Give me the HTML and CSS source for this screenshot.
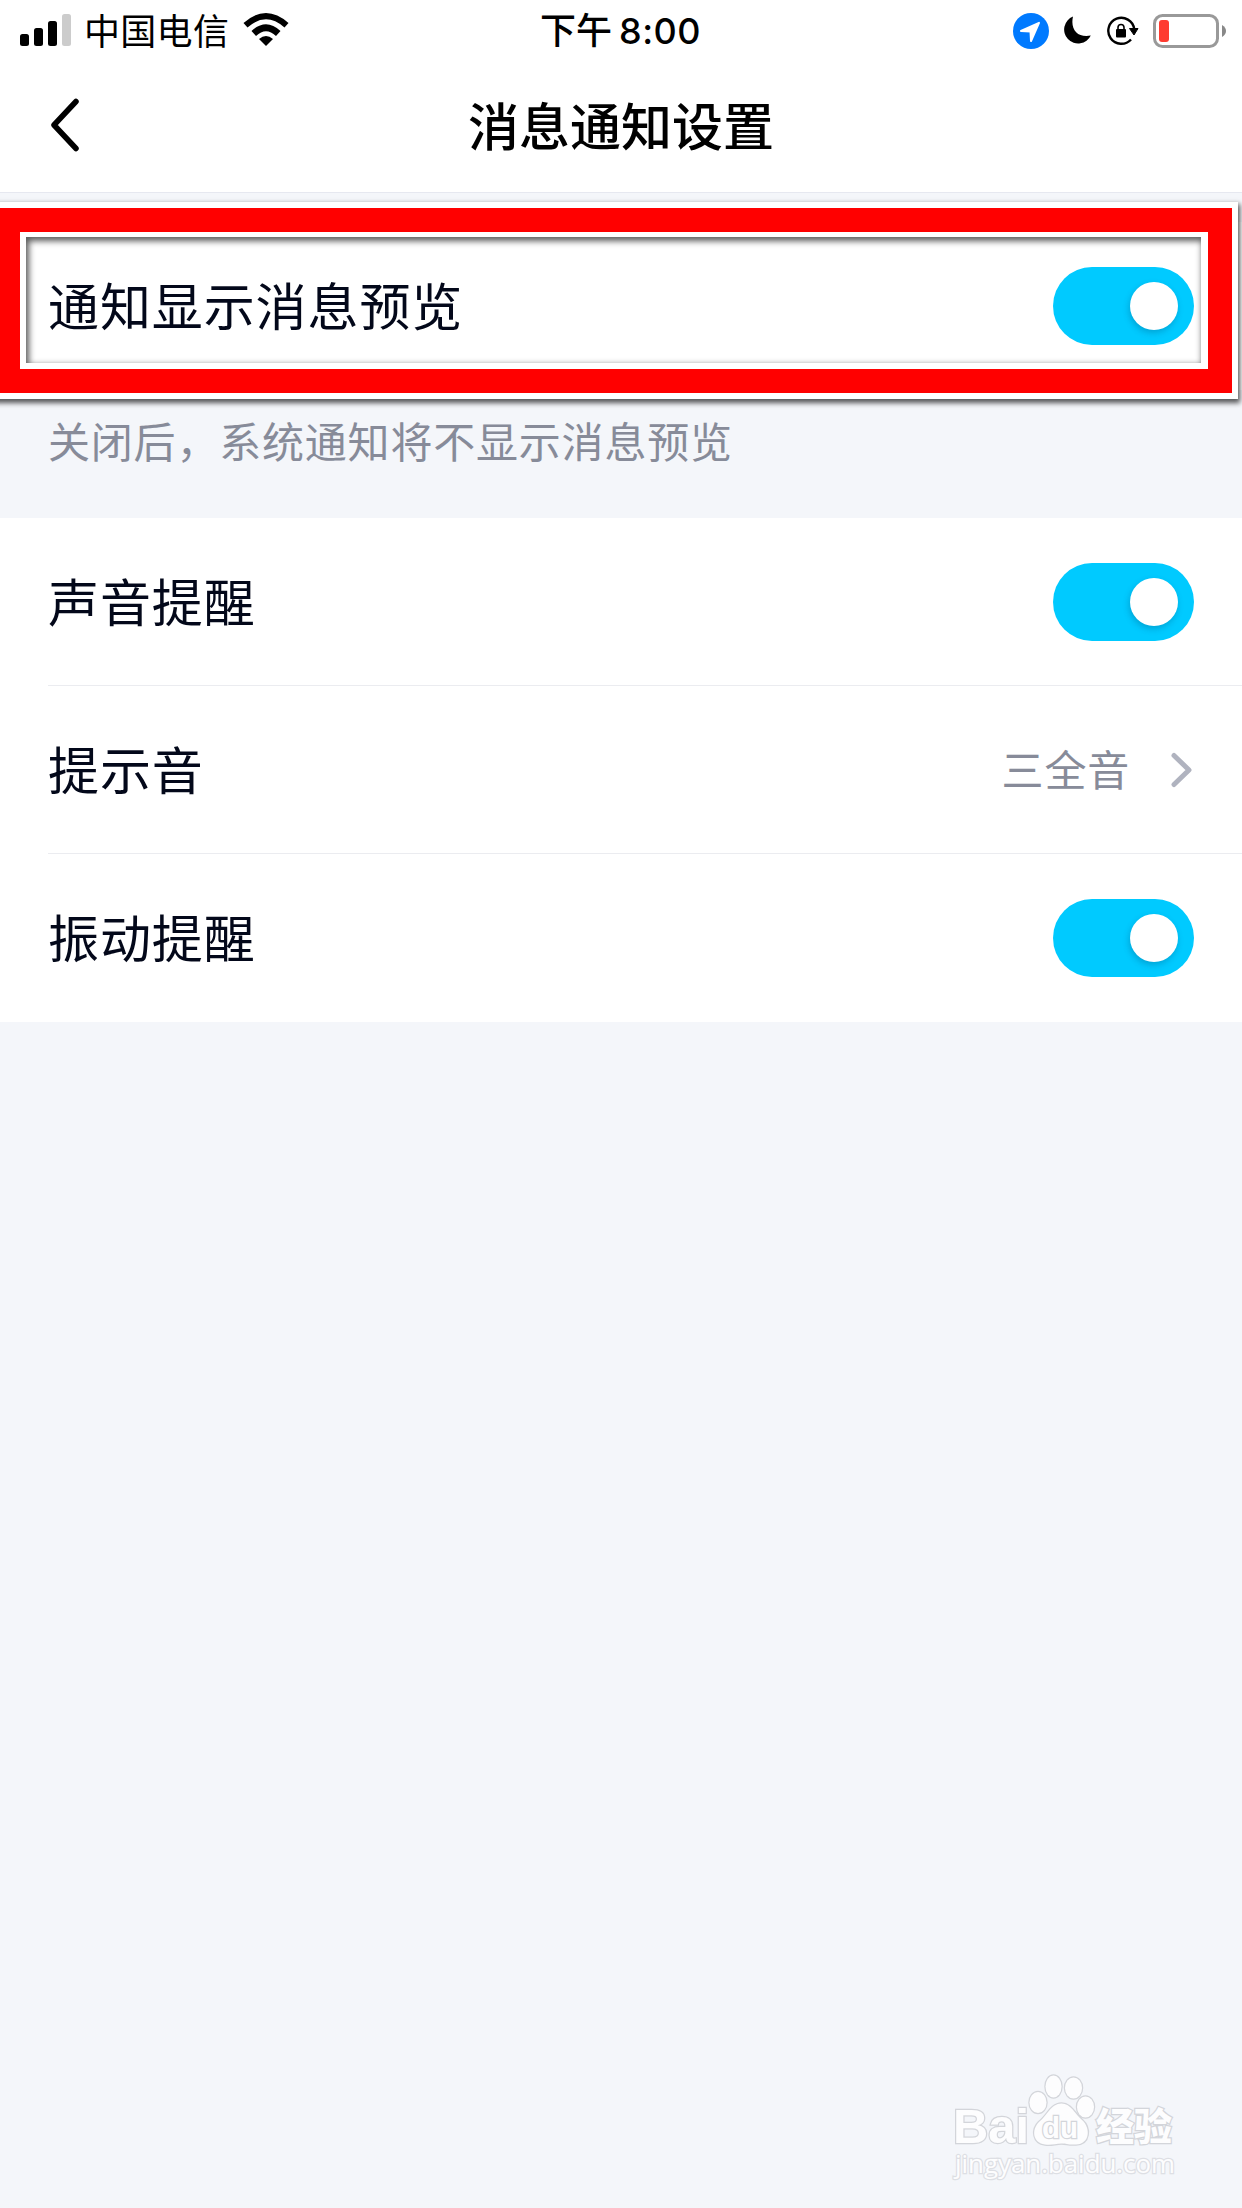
FILE: index.html
```
<!DOCTYPE html>
<html lang="zh-CN">
<head>
    <meta charset="UTF-8">
    <meta name="viewport" content="width=device-width, initial-scale=1.0">
    <title>消息通知设置</title>
    <link rel="stylesheet" href="styles.css">
</head>
<body>

    <div class="status-bar">
        <div class="status-left">
            <svg class="signal" width="51" height="32" viewBox="0 0 51 32">
                <rect x="0" y="20" width="9" height="12" rx="2.5"/>
                <rect x="14" y="14" width="9" height="18" rx="2.5"/>
                <rect x="28" y="7" width="9" height="25" rx="2.5"/>
                <rect x="42" y="0" width="9" height="32" rx="2.5" fill="#ccc"/>
            </svg>
            <span class="carrier">中国电信</span>
            <svg class="wifi" width="46" height="33" viewBox="0 0 46 33">
                <path d="M0.5 10 Q23 -10 45.500 10 L41.500 14.500 Q23 -2 4.500 14.500 Z"/>
                <path d="M8.500 18 Q23 4.500 37.500 18 L33 23 Q23 13.500 13 23 Z"/>
                <path d="M16 26 Q23 20 30 26 L23 33 Z"/>
            </svg>
        </div>
        <div class="clock">下午<span>8:00</span></div>
        <div class="status-right">
            <svg class="location" width="36" height="36" viewBox="0 0 36 36">
                <circle cx="18" cy="18" r="18" fill="#007aff"/>
                <path d="M8 18 L26 9.800 L18 28 L17.500 18.500 Z" fill="#fff" stroke="#fff" stroke-width="2" stroke-linejoin="round"/>
            </svg>
            <svg class="moon" width="28" height="29" viewBox="0 0 28 29">
                <path d="M10 0.500 A14 14 0 1 0 27.800 19.500 C15 22 7 14 10 0.500 Z"/>
            </svg>
            <svg class="lock" width="32" height="30" viewBox="0 0 32 30">
                <path d="M27.200 13 A13 13 0 1 0 24 23.500" fill="none" stroke="#000" stroke-width="2.400"/>
                <path d="M22.500 12.500 H31 L27 19 Z" stroke="#000"/>
                <rect x="9" y="13" width="10" height="8.500" rx="1"/>
                <path d="M11 14 V11.500 A3 3 0 0 1 17 11.500 V14" fill="none" stroke="#000" stroke-width="1.600"/>
            </svg>
            <svg class="battery" width="74" height="34" viewBox="0 0 74 34">
                <rect x="1.500" y="1.500" width="63" height="31" rx="8" fill="none" stroke="#999" stroke-width="3"/>
                <rect x="6" y="6" width="10" height="22" rx="3" fill="#ff3b30"/>
                <path d="M69 11 Q73 13.500 73 17 Q73 20.500 69 23 Z" fill="#888"/>
            </svg>
        </div>
    </div>

    <header>
        <svg class="back" width="30" height="54" viewBox="0 0 30 54">
            <path d="M26 3.500 L4 27 L26 50.500"/>
        </svg>
        <h1>消息通知设置</h1>
    </header>

    <main>
        <section class="preview">
            <div class="row">
                <span class="label">通知显示消息预览</span>
                <span class="switch"></span>
            </div>
            <div class="frame"><div class="frame-inner"></div></div>
        </section>
        <p class="hint">关闭后，系统通知将不显示消息预览</p>

        <section>
            <div class="row">
                <span class="label">声音提醒</span>
                <span class="switch"></span>
            </div>
            <div class="row">
                <span class="label">提示音</span>
                <span class="value">三全音</span>
                <svg class="arrow" width="22" height="36" viewBox="0 0 22 36">
                    <path d="M3 3.500 L18 18 L3 32.500"/>
                </svg>
            </div>
            <div class="row">
                <span class="label">振动提醒</span>
                <span class="switch"></span>
            </div>
        </section>
    </main>

    <svg class="watermark" width="250" height="130" viewBox="0 0 250 130">
        <text class="brand" x="13" y="83" font-size="49" textLength="76" lengthAdjust="spacingAndGlyphs">Bai</text>
        <ellipse cx="98" cy="42.500" rx="8.500" ry="10.500"/>
        <ellipse cx="113.500" cy="26.500" rx="8" ry="11"/>
        <ellipse cx="133.500" cy="28" rx="8.500" ry="10.500"/>
        <ellipse cx="145.500" cy="47" rx="8.500" ry="10.500"/>
        <path d="M121.500 43.500 C131 43.500 135 54 142 60 C151 68 150 84 136 84.500 C128 85 127 83.500 121.500 83.500 C115 83.500 112 85.500 105 84.500 C93 83 91 70 99 62 C107 56 111 43.500 121.500 43.500 Z"/>
        <text class="du" x="102" y="78" font-size="30" textLength="36" lengthAdjust="spacingAndGlyphs">du</text>
        <text class="cn" x="156" y="80" font-size="38">经验</text>
        <text class="url" x="15" y="113" font-size="26" textLength="220" lengthAdjust="spacingAndGlyphs">jingyan.baidu.com</text>
    </svg>

</body>
</html>
```
FILE: styles.css
```
body {
    position: relative;
    margin: 0;
    height: 2208px;
    overflow: hidden;
    background-color: #f4f6fa;
    font-family: "Noto Sans CJK SC", sans-serif;
    color: #03081a;
}
svg {
    display: block;
    flex: none;
}
.status-bar {
    display: grid;
    grid-template-columns: 1fr auto 1fr;
    height: 62px;
    padding: 0 15px 0 20px;
    background-color: #fff;
    color: #000;
    font-size: 36px;
    line-height: 57px;
}
.status-left, .status-right {
    display: flex;
    align-items: center;
    height: 62px;
}
.status-right {
    justify-content: flex-end;
}
.signal {
    margin-right: 13px;
    margin-top: -2px;
}
.carrier {
    width: 147px;
    margin-top: -4px;
    letter-spacing: 0.300px;
}
.wifi {
    margin-left: 12px;
    margin-top: -3px;
}
.clock {
    margin-left: -6px;
    font-weight: 500;
}
.clock span {
    margin-left: 7px;
    font-family: Inter, sans-serif;
    font-weight: 500;
    letter-spacing: 0.500px;
}
.moon {
    margin-left: 14px;
}
.lock {
    margin-left: 16px;
}
.battery {
    margin-left: 14px;
}
.location, .moon, .lock, .battery {
    margin-top: -1px;
}
header {
    display: flex;
    align-items: center;
    height: 130px;
    padding: 0 50px;
    background-color: #fff;
    border-bottom: 1px solid #e6e8f0;
}
.back {
    margin-top: -4px;
}
.back path, .arrow path {
    fill: none;
    stroke: #000;
    stroke-width: 5.500;
    stroke-linecap: round;
    stroke-linejoin: round;
}
h1 {
    flex: 1;
    margin: -7px 30px 0 0;
    font-size: 51px;
    font-weight: 500;
    line-height: 70px;
    text-align: center;
    color: #000;
}
section {
    background-color: #fff;
}
.preview {
    position: relative;
    margin-top: 29px;
}
.row {
    display: flex;
    align-items: center;
    height: 168px;
    padding-right: 48px;
    margin-left: 48px;
    box-sizing: border-box;
    border-bottom: 1px solid #ebecf0;
}
.row:last-child, .preview .row {
    border-bottom: none;
}
.label {
    flex: 1;
    margin-top: -4px;
    font-size: 51px;
    letter-spacing: 0.900px;
}
.value {
    margin-top: -5px;
    font-size: 42px;
    letter-spacing: 0.800px;
    color: #878b99;
}
.arrow {
    margin-left: 41px;
    margin-right: 1px;
}
.arrow path {
    stroke: #b0b3bf;
    stroke-width: 5;
}
.switch {
    width: 141px;
    height: 78px;
    box-sizing: border-box;
    padding: 15px 16px 15px 77px;
    border-radius: 39px;
    background-color: #00caff;
}
.switch::before {
    content: "";
    display: block;
    width: 48px;
    height: 48px;
    border-radius: 50%;
    background-color: #fff;
    box-shadow: -1px 3px 6px rgba(0, 80, 120, 0.300);
}
.hint {
    height: 128px;
    margin: 0;
    padding-left: 48px;
    font-size: 42px;
    line-height: 100px;
    letter-spacing: 0.800px;
    color: #878b99;
}
/* red frame drawn over the first row */
.frame {
    position: absolute;
    top: -20px;
    left: -6px;
    right: 4px;
    height: 197px;
    box-sizing: border-box;
    border: 6px solid #fff;
    box-shadow: 1px 3px 5px 1px rgba(0, 0, 0, 0.650);
}
.frame-inner {
    height: 100%;
    box-sizing: border-box;
    border: 24px solid #f00;
    border-left-width: 20px;
}
.frame-inner::before {
    content: "";
    display: block;
    height: 100%;
    box-sizing: border-box;
    border: 6px solid #fff;
}
.frame-inner::after {
    content: "";
    position: absolute;
    top: 29px;
    left: 26px;
    right: 31px;
    bottom: 30px;
    box-shadow: inset 2px 3px 6px 1px rgba(0, 0, 0, 0.650);
}
.watermark {
    position: absolute;
    left: 940px;
    top: 2060px;
    fill: #fdfdfe;
    stroke: #d3d5da;
    stroke-width: 2.500px;
    paint-order: stroke;
}
.brand, .du {
    font-family: "Liberation Sans", sans-serif;
    font-weight: bold;
}
.cn {
    font-family: "Noto Sans CJK SC", sans-serif;
    font-weight: 900;
}
.url {
    font-family: "Open Sans", sans-serif;
    stroke: #dddfe4;
}
```
